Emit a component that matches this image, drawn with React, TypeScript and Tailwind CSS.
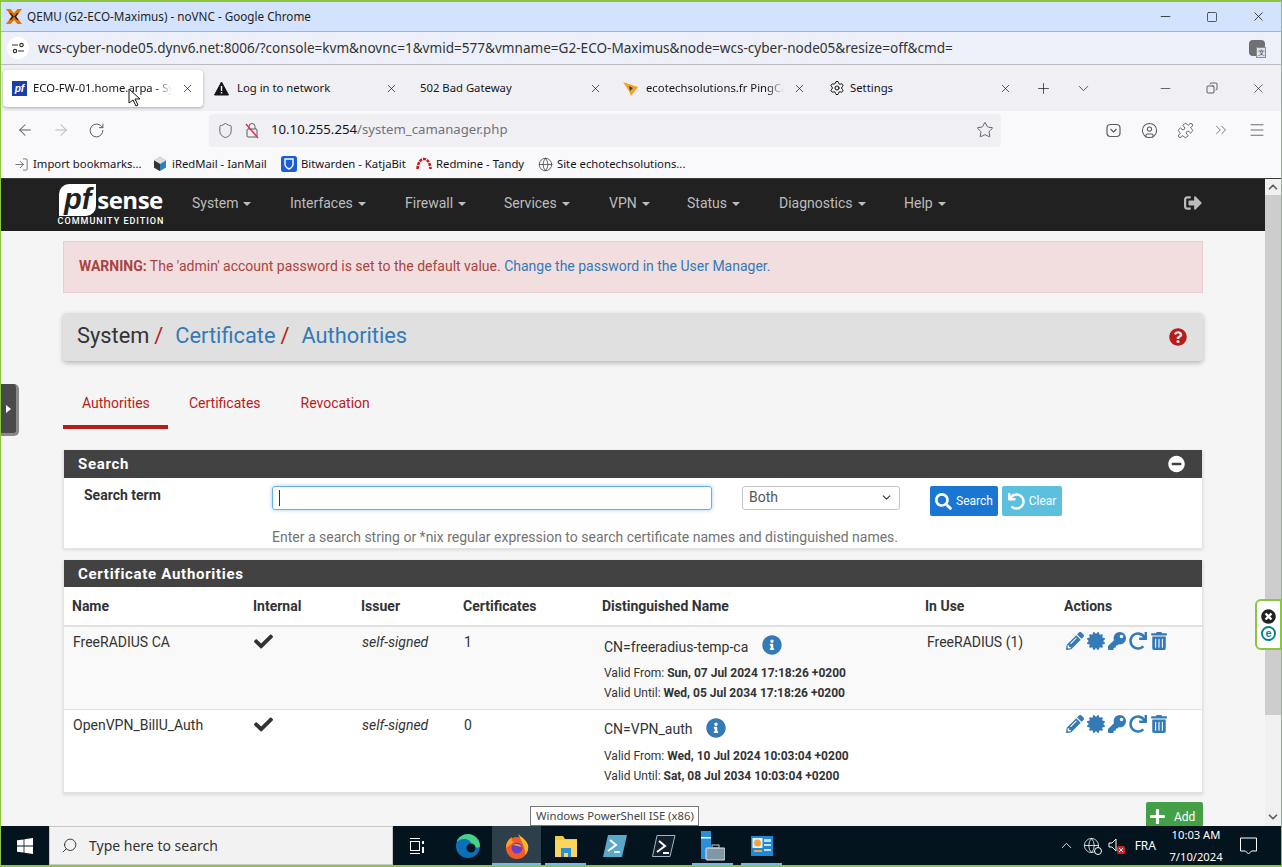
import React from "react";
import { ArrowLeft, ArrowRight, RotateCw, Shield, Star, Plus, ChevronDown, X, Minus, Square, Copy, Settings, Globe, Puzzle, ChevronsRight, Menu, CircleUser, ChevronUp, Search as SearchIc, LogIn } from "lucide-react";
import { FaCheck, FaInfoCircle, FaMinusCircle, FaSearch, FaUndo, FaPlus, FaSignOutAlt, FaQuestionCircle, FaPencilAlt, FaCertificate, FaKey, FaRedo, FaTrashAlt, FaTimesCircle } from "react-icons/fa";

const ui = "font-['Noto_Sans','Open_Sans',sans-serif]";

function ProxmoxLogo() {
  return (
    <svg width="16" height="15" viewBox="0 0 16 15">
      <path d="M0 0h4.500L8 4l3.500-4H16L10.500 7.500 16 15h-4.500L8 11l-3.500 4H0l5.500-7.500z" fill="#e57000" />
      <path d="M5 4l3 3.500L5 11H3.500L6 7.500 3.500 4zM11 4L8 7.500l3 3.500h1.500L10 7.500 12.500 4z" fill="#222" />
    </svg>
  );
}

function Tab({ w, icon, title, active, fade }: { w: string; icon?: React.ReactNode; title: string; active?: boolean; fade?: boolean }) {
  return (
    <div className={`${w} h-[37px] flex items-center shrink-0 relative ${active ? "bg-white rounded shadow-[0_1px_3px_rgba(0,0,0,0.3)]" : ""}`}>
      {icon}
      <span className={`flex-1 min-w-0 whitespace-nowrap text-[11.3px] text-[#15141a] ${fade ? "[mask-image:linear-gradient(to_right,black_88%,transparent)]" : ""}`}>{title}</span>
      <X size={13} strokeWidth={1.3} className="mx-[9px] shrink-0 text-[#15141a]" />
    </div>
  );
}

function Bookmark({ icon, text, w }: { icon: React.ReactNode; text: string; w: string }) {
  return (
    <div className={`${w} flex items-center gap-[4px] shrink-0`}>
      {icon}
      <span className="text-[11.3px] text-[#15141a] whitespace-nowrap">{text}</span>
    </div>
  );
}

function NavItem({ label, w }: { label: string; w: string }) {
  return (
    <div className={`${w} flex items-center gap-[5px] text-[14px] text-[#bdbdbd] shrink-0`}>
      {label}
      <span className="w-0 h-0 border-x-[4px] border-x-transparent border-t-[4px] border-t-[#bdbdbd] mt-[1px]" />
    </div>
  );
}

function Actions() {
  return (
    <div className="flex items-center gap-[3px] text-[#337ab7] text-[18px]">
      <FaPencilAlt />
      <FaCertificate />
      <FaKey />
      <FaRedo />
      <FaTrashAlt />
    </div>
  );
}

function Row({ name, certs, dn, infoGap, from, until, inUse, bg, h }: { name: string; certs: string; dn: string; infoGap: string; from: string; until: string; inUse?: string; bg: string; h: string }) {
  return (
    <tr className={`${bg} ${h} align-top border-b border-[#e0e0e0]`}>
      <td className="pl-[9px] pt-[5px]">{name}</td>
      <td className="pl-[9px] pt-[5px]"><FaCheck className="text-[19px] text-[#333]" /></td>
      <td className="pl-[9px] pt-[5px] italic">self-signed</td>
      <td className="pl-[9px] pt-[5px]">{certs}</td>
      <td className="pl-[10px] pt-[6px]">
        <div className="flex items-center h-[24px]">
          <span className="mt-[4px]">{dn}</span>
          <FaInfoCircle className={`${infoGap} text-[20px] text-[#337ab7] shrink-0`} />
        </div>
        <div className="text-[12px] leading-[20px] mt-[6px]">Valid From: <b>{from}</b></div>
        <div className="text-[12px] leading-[20px]">Valid Until: <b>{until}</b></div>
      </td>
      <td className="pl-[10px] pt-[5px]">{inUse}</td>
      <td className="pl-[10px] pt-[5px]"><Actions /></td>
    </tr>
  );
}

function Win({ active, line, children }: { active?: boolean; line?: boolean; children: React.ReactNode }) {
  return (
    <div className={`w-[49px] h-full flex items-center justify-center relative shrink-0 ${active ? "bg-[#2d3f4a]" : ""}`}>
      {children}
      {line && <span className={`absolute bottom-0 h-[2px] bg-[#76b9ed] ${active ? "left-0 right-0" : "left-[4px] right-[4px]"}`} />}
    </div>
  );
}

export default function App() {
  return (
    <div className={`w-[1282px] h-[867px] overflow-hidden relative flex flex-col border-t-2 border-b-2 border-x border-[#8cc63f] bg-white ${ui}`}>
      {/* Chrome title bar */}
      <div className="h-[30px] bg-[#d3e3fd] flex items-center shrink-0 border-b border-[#aab4c2]">
        <div className="ml-[5px] mr-[5px]"><ProxmoxLogo /></div>
        <span className="text-[11.7px] text-[#1f1f1f] whitespace-nowrap">QEMU (G2-ECO-Maximus) - noVNC - Google Chrome</span>
        <div className="ml-auto flex items-center text-[#1f1f1f]">
          <Minus size={15} strokeWidth={1.3} className="mr-[33px]" />
          <Square size={12} strokeWidth={1.4} className="mr-[33px]" />
          <X size={15} strokeWidth={1.3} className="mr-[15px]" />
        </div>
      </div>
      {/* Chrome address bar */}
      <div className="h-[33px] bg-[#edf0f8] flex items-center shrink-0 border-b border-[#b9bcc2]">
        <div className="ml-[6px] w-[22px] h-[22px] rounded-full bg-white flex items-center justify-center">
          <svg width="13" height="12" viewBox="0 0 13 12" fill="none" stroke="#333" strokeWidth="1.2"><path d="M0 3h6M12 9H6" /><circle cx="9.500" cy="3" r="1.700" /><circle cx="3" cy="9" r="1.700" /></svg>
        </div>
        <span className="ml-[9px] text-[13.57px] text-[#333] whitespace-nowrap">wcs-cyber-node05.dynv6.net:8006/?console=kvm&amp;novnc=1&amp;vmid=577&amp;vmname=G2-ECO-Maximus&amp;node=wcs-cyber-node05&amp;resize=off&amp;cmd=</span>
        <div className="ml-auto mr-[16px] w-[16px] h-[16px] rounded-sm bg-[#6e7074] relative">
          <span className="absolute right-[-1px] bottom-[-2px] w-[10px] h-[11px] bg-[#dfe3ea] border border-[#8a8d91] text-[7px] leading-[9px] text-center text-[#333]">文</span>
        </div>
      </div>
      {/* Firefox tabs */}
      <div className="h-[46px] bg-[#f0f0f4] flex items-center shrink-0 pl-[2px]">
        <Tab w="w-[200px]" active fade title="ECO-FW-01.home.arpa - Sy" icon={<span className="ml-[9px] mr-[6px] w-[15px] h-[15px] bg-[#1a3fa8] text-white text-[10px] font-bold italic leading-[15px] text-center font-['Liberation_Sans']">pf</span>} />
        <Tab w="w-[204px]" title="Log in to network" icon={
          <svg className="ml-[11px] mr-[8px]" width="15" height="15" viewBox="0 0 15 15"><path d="M7.500 1L14.500 14H.5z" fill="#15141a" stroke="#15141a" strokeLinejoin="round" /><rect x="6.800" y="5" width="1.400" height="5" fill="#fff" /><rect x="6.800" y="11" width="1.400" height="1.500" fill="#fff" /></svg>
        } />
        <Tab w="w-[204px]" title="502 Bad Gateway" icon={<span className="w-[13px]" />} />
        <Tab w="w-[204px]" fade title="ecotechsolutions.fr PingCas" icon={<svg className="ml-[12px] mr-[8px]" width="15" height="15" viewBox="0 0 15 15"><path d="M0 1l15 5-7 9-2-5z" fill="#f6a21e" /><path d="M6 5l4 2-3 3z" fill="#3b3b3b" /></svg>} />
        <Tab w="w-[206px]" title="Settings" icon={<Settings size={16} strokeWidth={1.4} className="ml-[14px] mr-[5px]" />} />
        <Plus size={17} strokeWidth={1} className="ml-[14px] text-[#15141a]" />
        <ChevronDown size={17} strokeWidth={1} className="ml-[23px] text-[#15141a]" />
        <div className="ml-auto flex items-center text-[#15141a]">
          <Minus size={15} strokeWidth={1} className="mr-[33px]" />
          <Copy size={12} strokeWidth={1.3} className="mr-[33px] -scale-x-100" />
          <X size={15} strokeWidth={1} className="mr-[15px]" />
        </div>
      </div>
      {/* Firefox toolbar */}
      <div className="h-[38px] bg-[#f9f9fb] flex items-center shrink-0">
        <ArrowLeft size={18} strokeWidth={1.4} className="ml-[15px] text-[#5b5b66]" />
        <ArrowRight size={18} strokeWidth={1.4} className="ml-[18px] text-[#b5b5bb]" />
        <RotateCw size={17} strokeWidth={1.4} className="ml-[18px] text-[#5b5b66]" />
        <div className="ml-[104px] w-[792px] h-[33px] rounded bg-[#f0f0f4] flex items-center">
          <Shield size={17} strokeWidth={1.3} className="ml-[8px] text-[#5b5b66]" />
          <svg className="ml-[10px]" width="16" height="17" viewBox="0 0 16 17" fill="none"><rect x="3" y="7" width="10" height="8" rx="1" stroke="#5b5b66" /><path d="M5 7V4.500a3 3 0 0 1 6 0V7" stroke="#5b5b66" /><path d="M2 2l12 14" stroke="#e22850" strokeWidth="1.400" /></svg>
          <span className="ml-[11px] text-[13.2px] text-[#15141a] whitespace-nowrap">10.10.255.254<span className="text-[#72727a]">/system_camanager.php</span></span>
          <Star size={18} strokeWidth={1.3} className="ml-auto mr-[7px] text-[#5b5b66]" />
        </div>
        <div className="ml-[105px] flex items-center text-[#5b5b66]">
          <svg width="15" height="15" viewBox="0 0 15 15" fill="none" stroke="#5b5b66" strokeWidth="1.200"><rect x="1" y="1.500" width="13" height="12" rx="3.500" /><path d="M4.500 6l3 3 3-3" /></svg>
          <CircleUser size={17} strokeWidth={1.5} className="ml-[20px]" />
          <Puzzle size={17} strokeWidth={1.3} className="ml-[19px]" />
          <ChevronsRight size={18} strokeWidth={1.1} className="ml-[18px]" />
          <Menu size={18} strokeWidth={1.2} className="ml-[18px]" />
        </div>
      </div>
      {/* Bookmarks */}
      <div className="h-[30px] bg-[#f9f9fb] flex items-center shrink-0 pl-[13px] pt-[1px] border-b border-[#3a3a3a]">
        <Bookmark w="w-[138px]" text="Import bookmarks..." icon={<LogIn size={15} strokeWidth={1.3} className="text-[#5b5b66]" />} />
        <Bookmark w="w-[129px]" text="iRedMail - IanMail" icon={<svg width="16" height="16" viewBox="0 0 16 16"><path d="M8 1l6 3.500v7L8 15l-6-3.500v-7z" fill="#2d7fb8" /><path d="M8 1l6 3.500L8 8 2 4.500z" fill="#d9dde2" /><path d="M2 4.500L8 8v7l-6-3.500z" fill="#333" /></svg>} />
        <Bookmark w="w-[135px]" text="Bitwarden - KatjaBit" icon={<svg width="16" height="16" viewBox="0 0 16 16"><rect width="16" height="16" rx="2.500" fill="#175ddc" /><path d="M4 3h8v5c0 2.500-2 4-4 5-2-1-4-2.500-4-5z" fill="none" stroke="#fff" strokeWidth="1.400" /></svg>} />
        <Bookmark w="w-[122px]" text="Redmine - Tandy" icon={<svg width="16" height="14" viewBox="0 0 16 14" fill="none"><path d="M1.500 12C2 5 5 2 8 2s6 3 6.500 10" stroke="#c61a1a" strokeWidth="2.600" strokeDasharray="3 1" /></svg>} />
        <Bookmark w="w-[160px]" text="Site echotechsolutions..." icon={<Globe size={15} strokeWidth={1.2} className="text-[#3a3a3a]" />} />
      </div>

      {/* Page */}
      <div className="flex-1 min-h-0 flex font-['Roboto',sans-serif] text-[14px] text-[#333]">
        <div className="flex-1 min-w-0 bg-[#f5f5f5] overflow-hidden">
          <div className="h-[52px] bg-[#212121] flex items-center pb-[4px]">
            <div className="ml-[57px] w-[106px] shrink-0 flex flex-col items-center mt-[3px]">
              <div className="flex items-center h-[29px] mt-[3px]">
                <span className="w-[37px] h-[32px] bg-white rounded-tl-[10px] rounded-br-[10px] text-[#212121] font-['Liberation_Sans'] font-bold italic text-[29px] leading-[30px] text-center">pf</span>
                <span className="ml-[1px] text-white font-bold text-[24px] leading-[29px] tracking-[-0.5px] font-['Open_Sans']">sense</span>
              </div>
              <span className="text-white text-[9px] font-medium tracking-[1px] leading-[11px] mt-[2px] whitespace-nowrap">COMMUNITY EDITION</span>
            </div>
            <div className="flex items-center ml-[28px]">
              <NavItem w="w-[98px]" label="System" />
              <NavItem w="w-[115px]" label="Interfaces" />
              <NavItem w="w-[99px]" label="Firewall" />
              <NavItem w="w-[105px]" label="Services" />
              <NavItem w="w-[78px]" label="VPN" />
              <NavItem w="w-[92px]" label="Status" />
              <NavItem w="w-[125px]" label="Diagnostics" />
              <NavItem w="w-[80px]" label="Help" />
            </div>
            <FaSignOutAlt className="ml-[200px] text-[18px] text-[#bdbdbd]" />
          </div>

          <div className="ml-[62px] w-[1140px]">
            <div className="mt-[10px] h-[52px] bg-[#f2dede] border border-[#ebccd1] text-[#a94442] flex items-center pl-[15px] pb-[1px]">
              <span><b>WARNING:</b> The 'admin' account password is set to the default value. <span className="text-[#337ab7]">Change the password in the User Manager.</span></span>
            </div>
            <div className="mt-[20px] h-[48px] bg-[#e0e0e0] rounded-sm shadow-[0_2px_5px_rgba(0,0,0,0.26)] flex items-center pl-[14px] pb-[1px] text-[21.8px]">
              <span className="text-[#333]">System</span>
              <span className="text-[#b71c1c] ml-[5px]">/</span>
              <span className="text-[#337ab7] ml-[12px]">Certificate</span>
              <span className="text-[#b71c1c] ml-[5px]">/</span>
              <span className="text-[#337ab7] ml-[12px]">Authorities</span>
              <FaQuestionCircle className="ml-auto mr-[16px] text-[18px] text-[#b71c1c]" />
            </div>
            <div className="mt-[18px] flex h-[50px] text-[#b71c1c]">
              <div className="w-[105px] pl-[19px] pt-[14px] border-b-4 border-[#b71c1c]">Authorities</div>
              <div className="pl-[21px] pr-[20px] pt-[14px]">Certificates</div>
              <div className="px-[20px] pt-[14px]">Revocation</div>
            </div>

            <div className="mt-[21px] bg-white border border-[#e4e4e4] border-t-0 shadow-[0_1px_3px_rgba(0,0,0,0.12)] h-[99px]">
              <div className="h-[28px] bg-[#424242] flex items-center pl-[14px] pr-[17px] text-white text-[15px] font-bold tracking-[0.7px]">
                Search
                <span className="ml-auto w-[17px] h-[17px] rounded-full bg-[#424242] flex items-center justify-center"><FaMinusCircle className="text-[18px] text-white" /></span>
              </div>
              <div className="flex items-start pt-[8px]">
                <div className="w-[208px] pl-[20px] -mt-[1px] font-bold shrink-0">Search term</div>
                <div className="w-[440px] h-[24px] rounded-[3px] border border-[#66afe9] shadow-[0_0_4px_rgba(102,175,233,0.6)] flex items-center pl-[6px] shrink-0">
                  <span className="w-px h-[16px] bg-[#333]" />
                </div>
                <div className="ml-[30px] w-[158px] h-[24px] rounded-[3px] border border-[#c4c4c4] flex items-center px-[6px] pb-[1px] text-[#555] shrink-0">
                  Both
                  <ChevronDown size={13} strokeWidth={2} className="ml-auto text-[#333]" />
                </div>
                <div className="ml-[30px] w-[68px] h-[30px] rounded-[2px] bg-[#1976d2] text-white text-[12px] flex items-center justify-center gap-[4px] shrink-0"><FaSearch className="text-[17px]" />Search</div>
                <div className="ml-[4px] w-[60px] h-[30px] rounded-[2px] bg-[#5bc0de] text-white text-[12px] flex items-center justify-center gap-[4px] shrink-0"><FaUndo className="text-[17px]" />Clear</div>
              </div>
              <div className="ml-[208px] mt-[11px] text-[#737373] leading-[20px]">Enter a search string or *nix regular expression to search certificate names and distinguished names.</div>
            </div>

            <div className="mt-[11px] bg-white border border-[#e4e4e4] border-t-0 shadow-[0_1px_3px_rgba(0,0,0,0.12)]">
              <div className="h-[27px] bg-[#424242] flex items-center pl-[14px] pt-[2px] text-white text-[15px] font-bold tracking-[0.7px]">Certificate Authorities</div>
              <table className="w-full table-fixed border-collapse">
                <colgroup>
                  <col className="w-[181px]" /><col className="w-[108px]" /><col className="w-[102px]" /><col className="w-[139px]" /><col className="w-[323px]" /><col className="w-[139px]" /><col className="w-[146px]" />
                </colgroup>
                <thead>
                  <tr className="h-[39px] text-left border-b-2 border-[#e0e0e0]">
                    {["Name", "Internal", "Issuer", "Certificates", "Distinguished Name", "In Use", "Actions"].map((t) => (
                      <th key={t} className="pl-[8px] font-bold">{t}</th>
                    ))}
                  </tr>
                </thead>
                <tbody>
                  <Row bg="bg-[#f9f9f9]" h="h-[83px]" name="FreeRADIUS CA" certs="1" dn="CN=freeradius-temp-ca" infoGap="ml-[14px]" from="Sun, 07 Jul 2024 17:18:26 +0200" until="Wed, 05 Jul 2034 17:18:26 +0200" inUse="FreeRADIUS (1)" />
                  <Row bg="bg-white" h="h-[83px]" name="OpenVPN_BillU_Auth" certs="0" dn="CN=VPN_auth" infoGap="ml-[14px]" from="Wed, 10 Jul 2024 10:03:04 +0200" until="Sat, 08 Jul 2034 10:03:04 +0200" />
                </tbody>
              </table>
            </div>

            <div className="mt-[8px] flex justify-end">
              <div className="w-[57px] h-[30px] rounded-[2px] bg-[#43a047] text-white text-[12px] flex items-center pl-[3px] gap-[8px]"><FaPlus className="text-[17px]" />Add</div>
            </div>
          </div>
        </div>
        {/* Scrollbar */}
        <div className="w-[16px] shrink-0 bg-[#f0f0f0] flex flex-col items-center">
          <ChevronUp size={14} strokeWidth={3} className="h-[16px] text-[#606060]" />
          <div className="w-full h-[520px] bg-[#cdcdcd]" />
          <ChevronDown size={14} strokeWidth={3} className="mt-auto mb-[2px] text-[#606060]" />
        </div>
      </div>

      {/* Taskbar */}
      <div className="h-[39px] shrink-0 bg-[#03141f] flex items-center">
        <div className="w-[48px] h-full flex items-center justify-center">
          <svg width="16" height="16" viewBox="0 0 16 16" fill="#fff"><path d="M0 2.300l6.600-.9v6.200H0zM7.400 1.300L16 0v7.600H7.400zM0 8.400h6.600v6.200L0 13.700zM7.400 8.400H16V16l-8.600-1.300z" /></svg>
        </div>
        <div className="w-[344px] h-full bg-[#f2f2f2] border border-[#c8c8c8] flex items-center">
          <SearchIc size={17} strokeWidth={1.2} className="ml-[11px] -scale-x-100 text-[#222]" />
          <span className="ml-[11px] text-[14px] text-[#333]">Type here to search</span>
        </div>
        <Win>
          <svg className="-ml-[2px]" width="16" height="16" viewBox="0 0 16 16" fill="none" stroke="#fff"><path d="M1 .5h10M1 15.500h10" /><rect x="1.500" y="3.500" width="9" height="9" /><rect x="13" y="3" width="2" height="3" fill="#fff" stroke="none" /><rect x="13" y="9" width="2" height="6" fill="#fff" stroke="none" /></svg>
        </Win>
        <div className="w-px shrink-0" />
        <Win>
          <svg width="24" height="24" viewBox="0 0 24 24"><circle cx="12" cy="12" r="12" fill="#0c70b8" /><path d="M24 12C24 5 18 0 12 0 7 0 2 3 .5 8c3-3 8-4 12-2 3 1.500 3 5 1 6 5 2 10.500 2 10.500 0z" fill="#46d18b" /><circle cx="15" cy="14" r="4.500" fill="#03141f" /></svg>
        </Win>
        <Win active line>
          <svg width="24" height="26" viewBox="0 0 24 26"><circle cx="12" cy="15" r="11" fill="#f25c2a" /><path d="M13 1c3 3 8 5 10 11 1 4-1 8-3 10 1-6-3-13-7-21z" fill="#fdb72b" /><path d="M1 15C1 9 4 6 7 4c-1 3 0 4 2 5z" fill="#ff9d2e" /><circle cx="12" cy="15" r="5.500" fill="#6d3fc4" /><path d="M8 12c3-2 7-1 9 2-3-1-6-1-9-2z" fill="#f8a13a" /></svg>
        </Win>
        <Win line>
          <svg width="22" height="22" viewBox="0 0 22 22"><path d="M0 1h8l2 3h12v18H0z" fill="#f6c944" /><rect y="5" width="22" height="17" fill="#fbd65c" /><rect x="6" y="13" width="10" height="9" fill="#2a8fd8" /><rect x="9" y="18" width="4" height="4" fill="#fbd65c" /></svg>
        </Win>
        <Win>
          <svg width="24" height="24" viewBox="0 0 24 24"><path d="M5 1h19l-5 22H0z" fill="#5aa9c9" /><path d="M7 6l6 5-8 6" fill="none" stroke="#fff" strokeWidth="2" /><path d="M11 18h6" stroke="#dfe7ea" strokeWidth="2" /></svg>
        </Win>
        <Win>
          <svg width="24" height="22" viewBox="0 0 24 22"><path d="M5 .5h18l-5 21H.5z" fill="#14212c" stroke="#9db7cb" /><path d="M7 6l6 5-8 6" fill="none" stroke="#fff" strokeWidth="2" /><path d="M11 18h6" stroke="#fff" strokeWidth="2" /></svg>
        </Win>
        <Win line>
          <svg width="24" height="30" viewBox="0 0 24 30"><rect x="0" y="0" width="10" height="28" fill="#2a8fd8" /><rect y="6" width="10" height="1.500" fill="#fff" /><rect x="5" y="17" width="19" height="12" rx="1" fill="#7f98a8" stroke="#e5e5e5" /><rect x="11" y="14" width="7" height="3" fill="none" stroke="#c8c8c8" /></svg>
        </Win>
        <Win line>
          <svg width="22" height="20" viewBox="0 0 22 20"><rect width="22" height="20" fill="#1f87d6" /><rect x="1.500" y="2" width="10" height="10" fill="#e8f3fb" /><circle cx="6.500" cy="7" r="3.500" fill="#f2a33a" /><rect x="13" y="3" width="7" height="3" fill="#bfe0f7" /><rect x="13" y="8" width="7" height="2" fill="#bfe0f7" /><rect x="3" y="14" width="8" height="2" fill="#f2a33a" /><rect x="13" y="13" width="7" height="2" fill="#bfe0f7" /></svg>
        </Win>
        <div className="ml-auto flex items-center text-white">
          <ChevronUp size={17} strokeWidth={1.2} />
          <div className="relative ml-[8px]">
            <Globe size={17} strokeWidth={1.1} />
            <span className="absolute right-[-2px] bottom-[-1px] w-[8px] h-[8px] rounded-full border border-white bg-[#03141f]" />
          </div>
          <svg className="ml-[8px]" width="17" height="17" viewBox="0 0 17 17"><path d="M1 6h3l4-4v12l-4-4H1z" fill="none" stroke="#fff" /><rect x="9" y="9" width="8" height="8" rx="2" fill="#d6232b" /><path d="M11 11l4 4M15 11l-4 4" stroke="#fff" /></svg>
          <span className="ml-[10px] text-[12px]">FRA</span>
          <div className="ml-[11px] w-[58px] text-center text-[11.2px] leading-[22px]">
            <div>10:03 AM</div>
            <div>7/10/2024</div>
          </div>
          <svg className="ml-[15px] mr-[24px]" width="17" height="18" viewBox="0 0 17 18" fill="none" stroke="#fff"><path d="M.5 1h16v13h-5l-3 3-3-3h-5z" /></svg>
        </div>
      </div>

      {/* Overlays */}
      <div className="absolute left-[0px] top-[382px] w-[18px] h-[52px] bg-[#4a4a4a] rounded-r-[5px] border-r-[3px] border-b-[3px] border-[#8a8a8a] flex items-center justify-center">
        <span className="w-0 h-0 border-y-[4px] border-y-transparent border-l-[5px] border-l-white" />
      </div>
      <div className="absolute right-[-1px] top-[597px] w-[27px] h-[51px] bg-white border-2 border-[#8cc63f] rounded-l-[6px] flex flex-col items-center justify-center gap-[2px]">
        <FaTimesCircle className="text-[15px] text-[#222]" />
        <span className="w-[15px] h-[15px] rounded-full border-2 border-[#00838f] text-[#00838f] text-[11px] font-bold leading-[10px] text-center font-['Liberation_Sans']">e</span>
      </div>
      <div className="absolute left-[529px] top-[804px] w-[169px] h-[20px] bg-white border border-[#767676] text-[11.3px] text-[#444] flex items-center pl-[5px] whitespace-nowrap">Windows PowerShell ISE (x86)</div>
      <svg className="absolute left-[127px] top-[86px]" width="14" height="20" viewBox="0 0 14 20"><path d="M1 1v14l4-3 3 6 2-1-3-6h5z" fill="#fff" stroke="#111" /></svg>
    </div>
  );
}
